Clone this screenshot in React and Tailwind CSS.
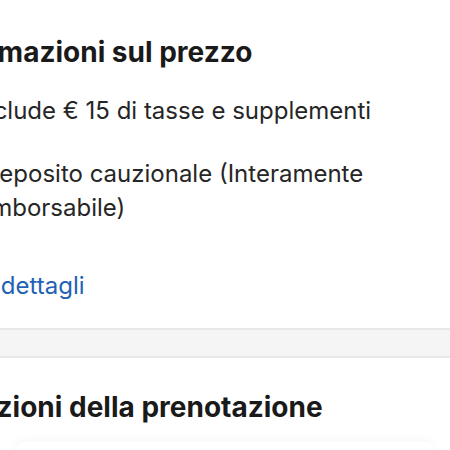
import React from 'react';

const font = { fontFamily: 'Inter, "Liberation Sans", sans-serif' };

const PriceInfo = () => (
  <section>
    <h2 className="-ml-[67px] pt-[36px] text-[28px] leading-[32px] font-bold text-[#1a1a1a]">
      Informazioni sul prezzo
    </h2>
    <div className="text-[24px] leading-[34px] text-[#262626]">
      <p className="-ml-[27px] mt-[26px] whitespace-nowrap">Include € 15 di tasse e supplementi</p>
      <p className="-ml-[24px] indent-[6px] mt-[29px] w-[400px]">Deposito cauzionale (Interamente rimborsabile)</p>
      <a className="-ml-[85px] mt-[44px] block text-[#1e62b3]">Mostra dettagli</a>
    </div>
  </section>
);

const App = () => {
  return (
    <div className="w-[450px] h-[450px] overflow-hidden bg-white" style={font}>
      <PriceInfo />
      <div className="mt-[25px] h-[30px] border-y-2 border-[#e8e8e8] bg-[#f5f5f5]" />
      <section>
        <h2 className="-ml-[84px] mt-[33px] text-[28px] leading-[32px] font-bold text-[#1a1a1a]">
          Condizioni della prenotazione
        </h2>
      </section>
      <div className="mx-[16px] mt-[19px] h-[40px] rounded-t-lg bg-white shadow-[0_-2px_8px_rgba(0,0,0,0.04)]" />
    </div>
  );
};

export default App;
